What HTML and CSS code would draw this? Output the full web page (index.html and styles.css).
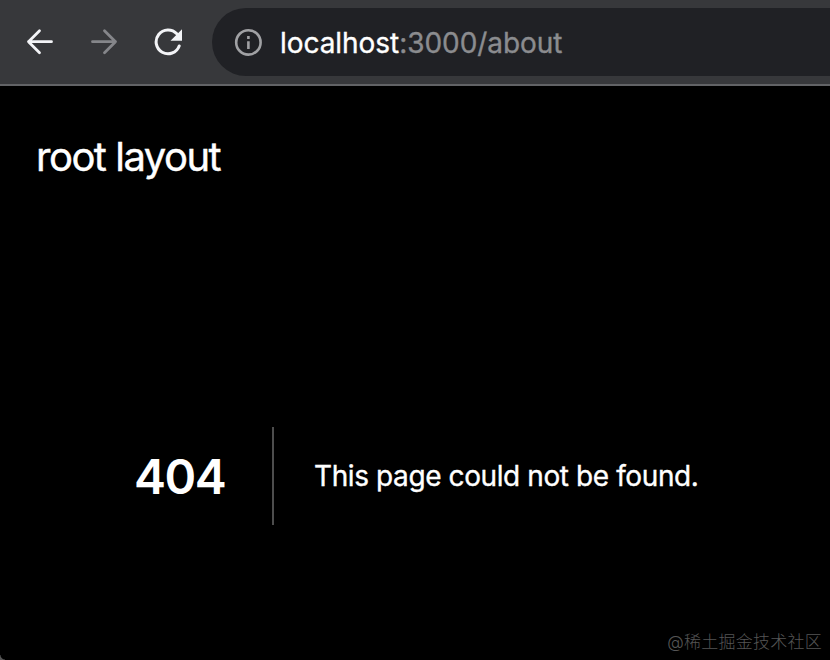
FILE: index.html
```html
<!DOCTYPE html>
<html lang="en">
<head>
<meta charset="utf-8">
<title>404: This page could not be found.</title>
<link rel="stylesheet" href="styles.css">
</head>
<body>
<header class="toolbar">
  <svg class="icon" viewBox="0 0 28 28"><path d="M25.5 13.700H2.500M13.500 2.700l-11 11 11 11"/></svg>
  <svg class="icon icon-disabled" viewBox="0 0 28 28"><path d="M2.500 13.700h23M14.500 2.700l11 11-11 11"/></svg>
  <svg class="icon reload" viewBox="0 0 28 28"><path d="M25.200 18A11.900 11.900 0 1 1 22.800 5.800"/><path class="fill" d="M28 1.300v11.500H16.500z"/></svg>
  <div class="address">
    <svg class="info" viewBox="0 0 28 28"><circle cx="14.400" cy="14.400" r="12.200"/><path d="M14.400 13.300v7.700M14.400 8v3"/></svg>
    <div class="url"><span class="host">localhost</span>:3000/about</div>
  </div>
</header>
<main class="page">
  <div class="layout-title">root layout</div>
  <section class="error">
    <h1 class="code">404</h1>
    <h2 class="message">This page could not be found.</h2>
  </section>
  <footer class="credit">@稀土掘金技术社区</footer>
</main>
<div class="corner"></div>
</body>
</html>
```
FILE: styles.css
```css
* { box-sizing: border-box; }
body {
  margin: 0;
  width: 830px;
  height: 660px;
  overflow: hidden;
  background: #000;
  color: #fff;
  font-family: Inter, "Noto Sans CJK SC", sans-serif;
}
.toolbar {
  display: flex;
  align-items: center;
  gap: 36px;
  height: 86px;
  padding-left: 26px;
  background: #37383b;
  border-bottom: 2px solid #626366;
}
.icon {
  width: 28px;
  height: 28px;
  flex: none;
  fill: none;
  stroke: #f3f4f7;
  stroke-width: 2.8;
  stroke-linecap: round;
  stroke-linejoin: round;
}
.icon-disabled { stroke: #85868a; }
.reload { stroke-width: 3; }
.icon .fill { fill: #f3f4f7; stroke: none; }
.address {
  display: flex;
  align-items: center;
  gap: 18px;
  flex: 1;
  height: 68px;
  margin-left: -6px;
  padding-left: 22px;
  background: #202125;
  border-radius: 34px 0 0 34px;
}
.info {
  width: 28px;
  height: 28px;
  fill: none;
  stroke: #a0a1a4;
  stroke-width: 2.6;
}
.url {
  padding-top: 1px;
  font-size: 28px;
  letter-spacing: -0.05px;
  color: #8b8c8f;
  -webkit-text-stroke: 0.35px currentColor;
  white-space: nowrap;
}
.host { color: #fff; }
.page {
  display: flex;
  flex-direction: column;
  height: 574px;
  padding: 47px 8px 8px 36px;
}
.layout-title {
  height: 48px;
  font-size: 40px;
  line-height: 48px;
  letter-spacing: -1.5px;
  -webkit-text-stroke: 0.4px currentColor;
}
.error {
  display: flex;
  align-items: center;
  height: 98px;
  margin: 246px 0 auto 98px;
}
.code {
  width: 140px;
  height: 98px;
  margin: 0 40px 0 0;
  border-right: 2px solid #4d4d4d;
  font-size: 48px;
  font-weight: 600;
  line-height: 100px;
  letter-spacing: -1.5px;
}
.message {
  margin: 0;
  font-size: 28px;
  font-weight: 400;
  line-height: 56px;
  letter-spacing: -0.4px;
  -webkit-text-stroke: 0.35px currentColor;
  white-space: nowrap;
}
.credit {
  align-self: flex-end;
  font-size: 17px;
  font-weight: 300;
  line-height: 20px;
  letter-spacing: 0.25px;
  color: #555;
}
.corner {
  position: absolute;
  left: 0;
  bottom: 0;
  width: 5px;
  height: 5px;
  background: radial-gradient(circle at 100% 0, transparent 4px, #555 5px);
}
```
